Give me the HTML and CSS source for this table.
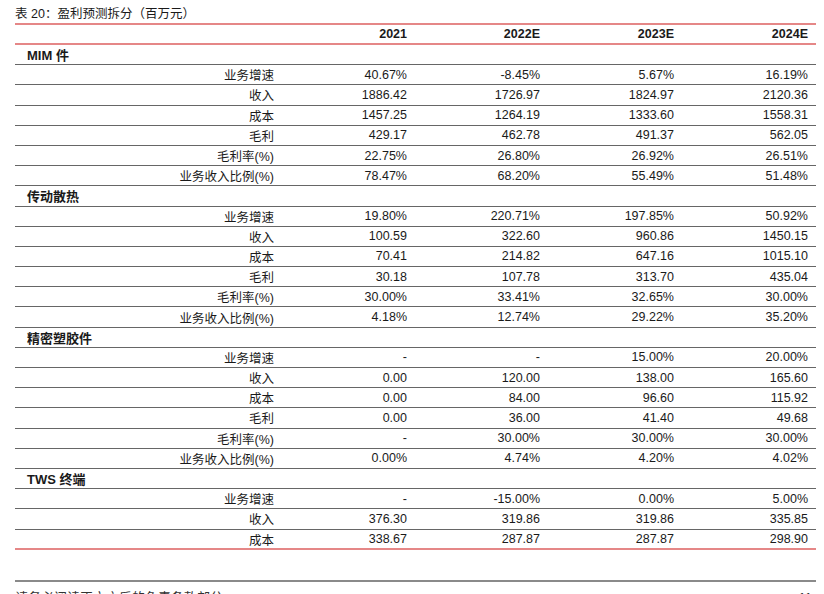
FILE: index.html
```html
<!DOCTYPE html>
<html lang="zh">
<head>
<meta charset="utf-8">
<title>盈利预测拆分</title>
<link rel="stylesheet" href="styles.css">
</head>
<body>
<div class="page">
  <div class="title">表 20：盈利预测拆分（百万元）</div>
  <div class="table">
    <div class="row head">
      <div class="label"></div><div class="num">2021</div><div class="num">2022E</div><div class="num">2023E</div><div class="num">2024E</div>
    </div>

    <div class="row section"><div class="sec">MIM 件</div></div>
    <div class="row"><div class="label">业务增速</div><div class="num">40.67%</div><div class="num">-8.45%</div><div class="num">5.67%</div><div class="num">16.19%</div></div>
    <div class="row"><div class="label">收入</div><div class="num">1886.42</div><div class="num">1726.97</div><div class="num">1824.97</div><div class="num">2120.36</div></div>
    <div class="row"><div class="label">成本</div><div class="num">1457.25</div><div class="num">1264.19</div><div class="num">1333.60</div><div class="num">1558.31</div></div>
    <div class="row"><div class="label">毛利</div><div class="num">429.17</div><div class="num">462.78</div><div class="num">491.37</div><div class="num">562.05</div></div>
    <div class="row"><div class="label">毛利率(%)</div><div class="num">22.75%</div><div class="num">26.80%</div><div class="num">26.92%</div><div class="num">26.51%</div></div>
    <div class="row"><div class="label">业务收入比例(%)</div><div class="num">78.47%</div><div class="num">68.20%</div><div class="num">55.49%</div><div class="num">51.48%</div></div>

    <div class="row section"><div class="sec">传动散热</div></div>
    <div class="row"><div class="label">业务增速</div><div class="num">19.80%</div><div class="num">220.71%</div><div class="num">197.85%</div><div class="num">50.92%</div></div>
    <div class="row"><div class="label">收入</div><div class="num">100.59</div><div class="num">322.60</div><div class="num">960.86</div><div class="num">1450.15</div></div>
    <div class="row"><div class="label">成本</div><div class="num">70.41</div><div class="num">214.82</div><div class="num">647.16</div><div class="num">1015.10</div></div>
    <div class="row"><div class="label">毛利</div><div class="num">30.18</div><div class="num">107.78</div><div class="num">313.70</div><div class="num">435.04</div></div>
    <div class="row"><div class="label">毛利率(%)</div><div class="num">30.00%</div><div class="num">33.41%</div><div class="num">32.65%</div><div class="num">30.00%</div></div>
    <div class="row"><div class="label">业务收入比例(%)</div><div class="num">4.18%</div><div class="num">12.74%</div><div class="num">29.22%</div><div class="num">35.20%</div></div>

    <div class="row section"><div class="sec">精密塑胶件</div></div>
    <div class="row"><div class="label">业务增速</div><div class="num">-</div><div class="num">-</div><div class="num">15.00%</div><div class="num">20.00%</div></div>
    <div class="row"><div class="label">收入</div><div class="num">0.00</div><div class="num">120.00</div><div class="num">138.00</div><div class="num">165.60</div></div>
    <div class="row"><div class="label">成本</div><div class="num">0.00</div><div class="num">84.00</div><div class="num">96.60</div><div class="num">115.92</div></div>
    <div class="row"><div class="label">毛利</div><div class="num">0.00</div><div class="num">36.00</div><div class="num">41.40</div><div class="num">49.68</div></div>
    <div class="row"><div class="label">毛利率(%)</div><div class="num">-</div><div class="num">30.00%</div><div class="num">30.00%</div><div class="num">30.00%</div></div>
    <div class="row"><div class="label">业务收入比例(%)</div><div class="num">0.00%</div><div class="num">4.74%</div><div class="num">4.20%</div><div class="num">4.02%</div></div>

    <div class="row section"><div class="sec">TWS 终端</div></div>
    <div class="row"><div class="label">业务增速</div><div class="num">-</div><div class="num">-15.00%</div><div class="num">0.00%</div><div class="num">5.00%</div></div>
    <div class="row"><div class="label">收入</div><div class="num">376.30</div><div class="num">319.86</div><div class="num">319.86</div><div class="num">335.85</div></div>
    <div class="row last"><div class="label">成本</div><div class="num">338.67</div><div class="num">287.87</div><div class="num">287.87</div><div class="num">298.90</div></div>
  </div>
  <div class="footer">
    <span class="note">请务必阅读正文之后的免责条款部分</span>
    <span class="pnum">11</span>
  </div>
</div>
</body>
</html>
```

FILE: styles.css
```css
html, body {
  margin: 0;
  padding: 0;
  background: #ffffff;
  overflow: hidden;
}

body {
  font-family: "Liberation Sans", "Noto Sans CJK SC", sans-serif;
  font-size: 12.5px;
  color: #1a1a1a;
}

.page {
  width: 801px;
  padding: 4px 0 0 15px;
}

.title {
  height: 19px;
  line-height: 20px;
  font-size: 12.5px;
  white-space: nowrap;
}

.table {
  border-top: 2px solid #e58787;
}

.row {
  display: grid;
  grid-template-columns: 267px 133px 133px 134px 134px;
  box-sizing: border-box;
  height: 20.2px;
  border-bottom: 1px solid #666666;
  align-items: center;
  white-space: nowrap;
}

.row.head {
  height: 20px;
  border-bottom: 2px solid #e58787;
  font-weight: bold;
}

.row.last {
  border-bottom: 2px solid #e58787;
}

.label {
  text-align: right;
  padding-right: 8px;
}

.num {
  text-align: right;
  padding-right: 8px;
}

.sec {
  grid-column: 1 / -1;
  padding-left: 12px;
  font-weight: bold;
  font-size: 13px;
}

.footer {
  margin-top: 30px;
  border-top: 2px solid #8a8a8a;
  padding-top: 7px;
  display: flex;
  justify-content: space-between;
  font-size: 13px;
  line-height: 18px;
  color: #333333;
}

.pnum {
  padding-right: 4px;
}
```
